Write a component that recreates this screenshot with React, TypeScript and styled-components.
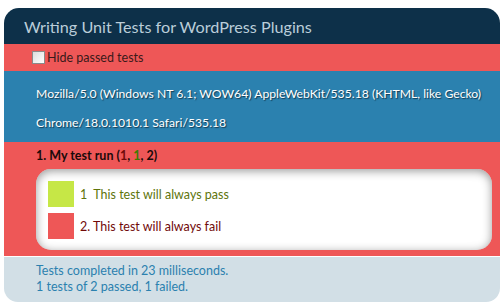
import styled, { createGlobalStyle } from "styled-components";

const GlobalStyle = createGlobalStyle`
    html, body {
        margin: 0;
        padding: 0;
        background: #fff;
    }
    body {
        font-family: Lato, "Open Sans", sans-serif;
    }
`;

const Page = styled.div`
    padding: 8px 0 0 4px;
    width: 496px;
`;

const Header = styled.h1`
    margin: 0;
    height: 36px;
    padding: 0 0 0 20px;
    display: flex;
    align-items: center;
    background-color: #0d3049;
    color: #bacdd9;
    font-size: 16.2px;
    font-weight: normal;
    border-radius: 15px 15px 0 0;
`;

const Toolbar = styled.div`
    height: 27px;
    padding-left: 28px;
    display: flex;
    align-items: center;
    background-color: #ee5757;
    color: #3a1a1a;
    font-size: 12.5px;
`;

const Check = styled.input.attrs({ type: "checkbox" })`
    margin: 0 2px 0 0;
    width: 13px;
    height: 13px;
    appearance: none;
    border: 1px solid #8a8a8a;
    background: linear-gradient(135deg, #dcdcdc, #ffffff);
    box-sizing: border-box;
`;

const UserAgent = styled.div`
    padding: 8px 0 5px 32px;
    background-color: #2b81af;
    color: #fff;
    font-size: 12.2px;
    line-height: 29px;
    white-space: nowrap;
    overflow: hidden;
    text-shadow: rgba(0, 0, 0, 0.55) 1px 1px 1px;
`;

const TestSection = styled.div`
    background-color: #ee5757;
    padding: 4px 8px 6px 32px;
    border-bottom: 1px solid #fff;
`;

const TestTitle = styled.div`
    font-size: 12.5px;
    font-weight: bold;
    color: #1a0a0a;
    height: 19px;
    line-height: 19px;
`;

const Count = styled.span<{ $tone: string }>`
    color: ${p => p.$tone};
`;

const Results = styled.ol`
    list-style: none;
    margin: 4px 0 0 0;
    padding: 12px 12px 11px 12px;
    background: #fff;
    border-radius: 15px;
    box-shadow: inset 0 2px 10px #999;
    display: flex;
    flex-direction: column;
    gap: 6px;
`;

const Item = styled.li<{ $tone: string }>`
    display: flex;
    align-items: center;
    gap: 6px;
    height: 26px;
    font-size: 12.5px;
    color: ${p => p.$tone};
`;

const Swatch = styled.span<{ $fill: string }>`
    width: 26px;
    height: 26px;
    background: ${p => p.$fill};
`;

const Footer = styled.div`
    padding: 6px 0 7px 32px;
    background-color: #d2dfe6;
    color: #2b81af;
    font-size: 12.5px;
    line-height: 16px;
    border-radius: 0 0 14px 14px;
`;

export default function App() {
    return (<>
        <GlobalStyle/>
        <Page>
            <Header>Writing Unit Tests for WordPress Plugins</Header>
            <Toolbar>
                <Check/>
                <span>Hide passed tests</span>
            </Toolbar>
            <UserAgent>
                Mozilla/5.0 (Windows NT 6.1; WOW64) AppleWebKit/535.18 (KHTML, like Gecko)<br/>
                Chrome/18.0.1010.1 Safari/535.18
            </UserAgent>
            <TestSection>
                <TestTitle>
                    1. My test run (<Count $tone={'#710909'}>1</Count>, <Count $tone={'#3c7a00'}>1</Count>, 2)
                </TestTitle>
                <Results>
                    <Item $tone={'#5e740b'}>
                        <Swatch $fill={'#c6e746'}/>
                        <span>1&nbsp; This test will always pass</span>
                    </Item>
                    <Item $tone={'#710909'}>
                        <Swatch $fill={'#ee5757'}/>
                        <span>2. This test will always fail</span>
                    </Item>
                </Results>
            </TestSection>
            <Footer>
                Tests completed in 23 milliseconds.<br/>
                1 tests of 2 passed, 1 failed.
            </Footer>
        </Page>
    </>)
}
